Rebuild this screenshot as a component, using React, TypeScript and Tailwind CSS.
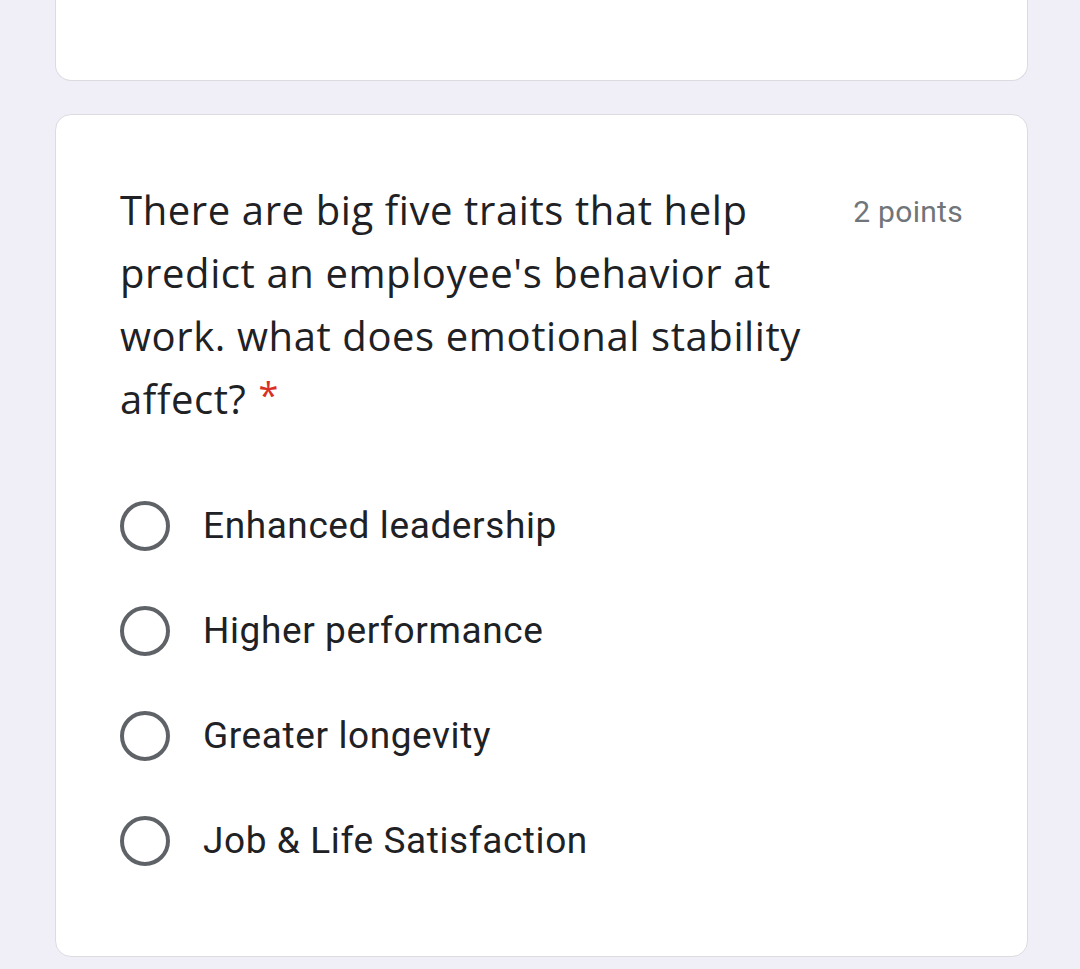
const options = [
  "Enhanced leadership",
  "Higher performance",
  "Greater longevity",
  "Job & Life Satisfaction",
];

function Radio() {
  return (
    <div className="h-[50px] w-[50px] shrink-0 rounded-full border-[4px] border-[#5f6368]" />
  );
}

export default function App() {
  return (
    <div className="min-h-[969px] bg-[#f0eff8] pl-[55px] pr-[52px] pb-[10px] font-['Roboto',sans-serif]">
      <div className="h-[81px] rounded-b-[16px] border border-t-0 border-[#dadce0] bg-white" />
      <div className="mt-[33px] rounded-[16px] border border-[#dadce0] bg-white px-[64px] pb-[90px] pt-[63px]">
        <div className="flex items-start justify-between">
          <p className="w-[700px] font-['Open_Sans',sans-serif] text-[40px] leading-[63px] tracking-[0.6px] text-[#202124]">
            There are big five traits that help predict an employee's behavior at work. what does emotional stability affect?
            <span className="ml-[12px] align-top text-[36px] leading-[56px] text-[#d93025]">*</span>
          </p>
          <div className="pt-[14px] text-[30px] leading-[40px] tracking-[0.3px] text-[#70757a]">2 points</div>
        </div>
        <div className="mt-[71px] flex flex-col gap-[55px]">
          {options.map((o) => (
            <div key={o} className="flex items-center gap-[33px]">
              <Radio />
              <span className="text-[37px] leading-[50px] tracking-[0.6px] text-[#202124]">{o}</span>
            </div>
          ))}
        </div>
      </div>
    </div>
  );
}
